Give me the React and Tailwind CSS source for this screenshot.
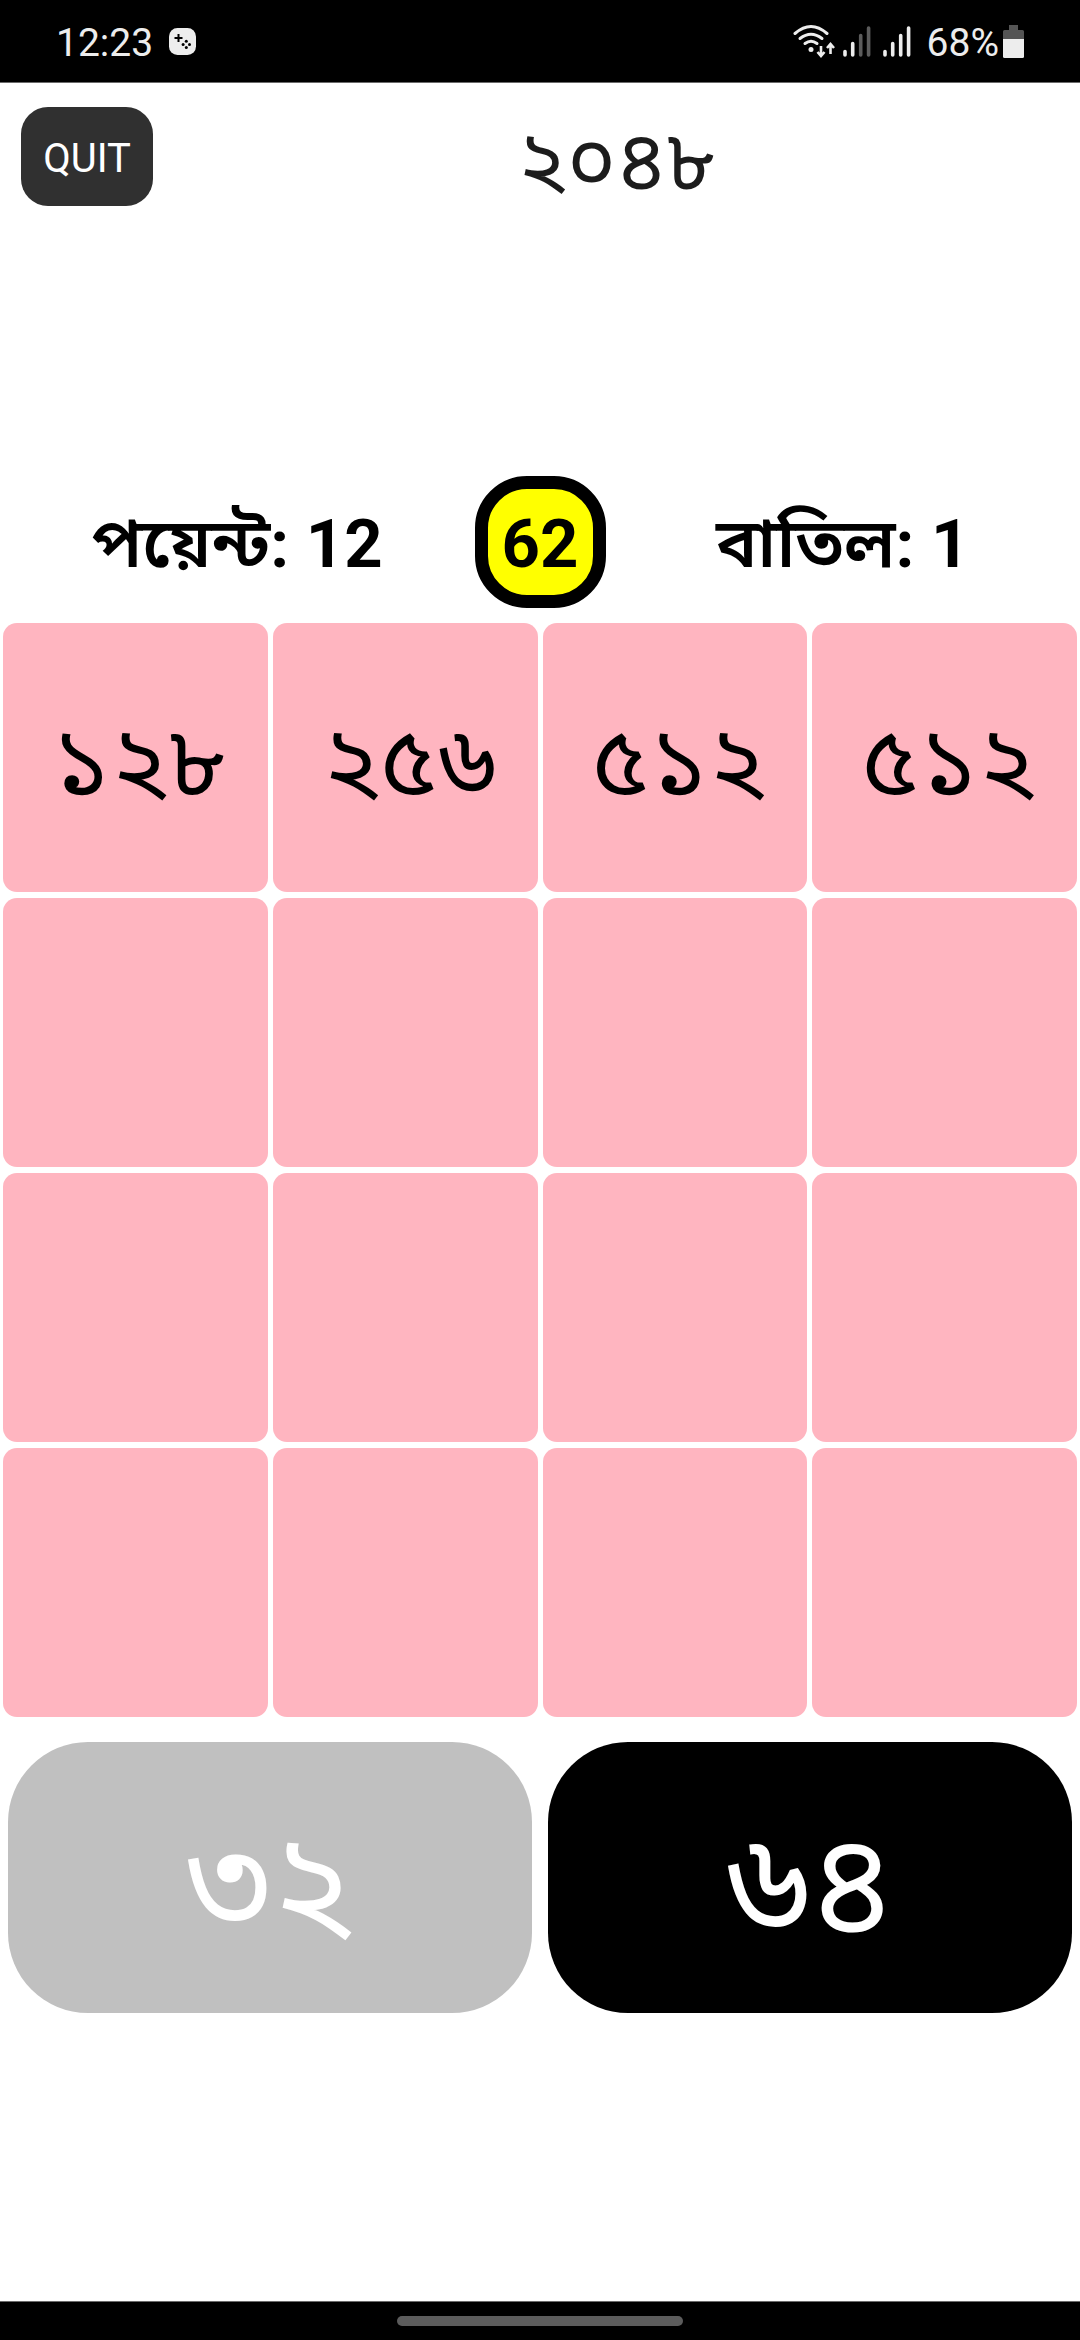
const tiles = ["১২৮", "২৫৬", "৫১২", "৫১২", "", "", "", "", "", "", "", "", "", "", "", ""];

function GameIcon() {
  return (
    <svg className="size-[27px]" viewBox="0 0 27 27" aria-hidden="true">
      <rect width="27" height="27" rx="8.5" fill="#ededed" />
      <path d="M9.5 6v8M5.5 10h8" stroke="#000" strokeWidth="2" />
      <g fill="#000">
        <circle cx="17.3" cy="13.2" r="1.5" />
        <circle cx="17.3" cy="19.6" r="1.5" />
        <circle cx="14.1" cy="16.4" r="1.5" />
        <circle cx="20.5" cy="16.4" r="1.5" />
      </g>
    </svg>
  );
}

function WifiIcon() {
  return (
    <svg className="h-[34px] w-[42px]" viewBox="0 0 42 34" aria-hidden="true" fill="none" stroke="#ededed">
      <g strokeWidth="3" strokeLinecap="round">
        <path d="M2 9.5Q18 -4.5 34 9.5" />
        <path d="M7 14.5Q18 6 29 14.5" />
        <path d="M12 19.5Q18 15 24 19.5" />
      </g>
      <circle cx="18" cy="25.5" r="2.5" fill="#ededed" stroke="none" />
      <path d="M28 22v9M24.5 28l3.500 4 3.500-4M37.500 30v-9M34 24l3.500-4 3.500 4" strokeWidth="2.6" />
    </svg>
  );
}

function SignalIcon({ strong }) {
  const faint = strong ? "#ededed" : "#5c5c5c";
  return (
    <svg className="h-[31px] w-[28px]" viewBox="0 0 28 31" aria-hidden="true" strokeWidth="3.6" strokeLinecap="round">
      <path d="M2 25.500v3.500M9.700 17.500v11.500" stroke="#ededed" />
      <path d="M17.700 9.500v19.500M25.600 2v27" stroke={faint} />
    </svg>
  );
}

function BatteryIcon() {
  return (
    <svg className="h-[33px] w-[21px]" viewBox="0 0 21 33" aria-hidden="true">
      <path d="M6 0h9v5h4.500a1.500 1.500 0 0 1 1.500 1.500V14H0V6.500A1.500 1.500 0 0 1 1.500 5H6z" fill="#555" />
      <path d="M0 14h21v17.500a1.500 1.500 0 0 1-1.500 1.500h-18A1.500 1.500 0 0 1 0 31.500z" fill="#ededed" />
    </svg>
  );
}

function Stat({ label, value }) {
  return (
    <p className="flex-1 pt-1">
      <span className="text-[69px] font-semibold">{label}</span>: {value}
    </p>
  );
}

export default function App() {
  return (
    <div className="flex min-h-screen flex-col bg-white font-['Roboto','Noto_Sans_Bengali',sans-serif] text-black">
      <div className="flex h-[83px] items-center justify-between border-b border-[#6b6b6b] bg-black px-14 text-[39px] leading-[48px] text-[#ededed]">
        <div className="flex items-center gap-4">
          <span className="pt-1">12:23</span>
          <GameIcon />
        </div>
        <div className="flex items-center gap-3">
          <div className="flex items-center gap-2">
            <WifiIcon />
            <SignalIcon />
          </div>
          <SignalIcon strong />
          <div className="flex items-center gap-1 pl-1">
            <span className="pt-1">68%</span>
            <BatteryIcon />
          </div>
        </div>
      </div>

      <main className="flex flex-1 flex-col">
        <header className="flex items-center pl-[21px] pt-6">
          <button className="h-[99px] w-[132px] rounded-[27px] bg-[#303030] pt-1 text-[40px] leading-[48px] text-white">QUIT</button>
          <h1 className="flex-1 pt-2 text-center text-[84px] leading-[88px] text-[#1c1c1c]">২০৪৮</h1>
        </header>

        <section className="mt-[270px] flex items-center text-center text-[67px] font-bold leading-[80px]">
          <Stat label="পয়েন্ট" value={12} />
          <p className="flex h-[132px] w-[131px] items-center justify-center rounded-[52px] border-[13px] border-black bg-[#ffff00] pt-1">62</p>
          <Stat label="বাতিল" value={1} />
        </section>

        <section className="mt-[15px] grid grid-cols-4 gap-x-[5px] gap-y-[6px] px-[3px]">
          {tiles.map((value, i) => (
            <button key={i} aria-label={value || "empty"} className="flex h-[269px] items-center justify-center rounded-[14px] bg-[#ffb5c0] pl-2 pt-2 text-[98px] leading-[120px]">
              {value}
            </button>
          ))}
        </section>

        <section className="mt-[25px] grid grid-cols-2 gap-4 px-2 text-[142px] leading-[180px] text-white">
          <button className="h-[271px] rounded-[80px] bg-[#c0c0c0] pt-3">৩২</button>
          <button className="h-[271px] rounded-[80px] bg-black pt-3">৬৪</button>
        </section>
      </main>

      <div className="flex h-[39px] items-center justify-center border-t border-[#6b6b6b] bg-black">
        <div className="h-[10px] w-[286px] rounded-full bg-[#5c5c5c]" />
      </div>
    </div>
  );
}
